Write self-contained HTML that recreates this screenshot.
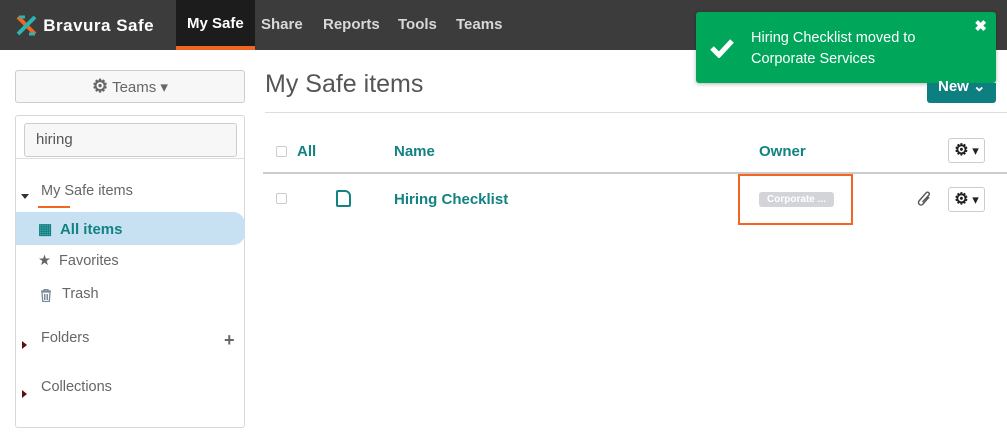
<!DOCTYPE html>
<html><head><style>
*{box-sizing:border-box;margin:0;padding:0}
body{width:1007px;height:445px;overflow:hidden;background:#fff;font-family:"Liberation Sans",sans-serif;position:relative;color:#555}
.hdr{position:absolute;left:0;top:0;width:1007px;height:50px;background:#3c3c3c}
.logo{position:absolute;left:16px;top:14px;color:#fff;font-size:17px;font-weight:bold;letter-spacing:.5px}
.nav{position:absolute;top:0;height:50px;line-height:50px;color:#d8d8d8;font-size:15px;font-weight:bold}
.act{background:#1c1c1c;color:#fff;border-bottom:4px solid #f26522;line-height:48px;padding:0 11px}
.teamsbtn{position:absolute;left:15px;top:70px;width:230px;height:33px;border:1px solid #ccc;border-radius:3px;background:#f7f7f7;text-align:center;line-height:31px;font-size:15px;color:#666}
.side{position:absolute;left:15px;top:115px;width:230px;height:313px;border:1px solid #d8d8d8;border-radius:3px}
.search{position:absolute;left:8px;top:7px;width:213px;height:34px;border:1px solid #ccc;border-radius:3px;background:#f7f7f7;padding-left:11px;line-height:32px;font-size:15px;color:#555}
.sep{position:absolute;left:0;top:42px;width:228px;border-top:1px solid #ddd}
.it{position:absolute;font-size:14.5px;color:#666}
.tri{position:absolute;width:0;height:0}
h1{position:absolute;left:265px;top:70px;font-weight:normal;font-size:25px;color:#555}
.teal{color:#128282;font-weight:bold;font-size:15px;position:absolute}
.cb{position:absolute;width:11px;height:11px;border:1px solid #ccc;border-radius:2px}
.gear{position:absolute;width:37px;height:25px;border:1px solid #ccc;border-radius:3px;background:#fff;font-size:13px;color:#222;text-align:center;line-height:23px}
.gear b{font-size:16px}
</style></head><body>
<div class="hdr">
 <div class="logo"><svg width="22" height="22" viewBox="0 0 22 22" style="vertical-align:-5px"><path d="M2 3L19 20" stroke="#f26522" stroke-width="4"/><path d="M19 3L2 20" stroke="#2ab5b0" stroke-width="4"/><path d="M3 3h6M13 20h6" stroke="#2ab5b0" stroke-width="3"/></svg> Bravura Safe</div>
 <div class="nav act" style="left:176px">My Safe</div>
 <div class="nav" style="left:261px">Share</div>
 <div class="nav" style="left:323px">Reports</div>
 <div class="nav" style="left:398px">Tools</div>
 <div class="nav" style="left:456px">Teams</div>
</div>
<div style="position:absolute;left:696px;top:12px;width:300px;height:71px;background:#00a65a;border-radius:3px;box-shadow:0 1px 4px rgba(0,0,0,.3);color:#fff;font-size:14.5px;line-height:21px">
 <svg width="24" height="20" viewBox="0 0 24 20" style="position:absolute;left:14px;top:26px"><path d="M2 10l7 7L22 3" stroke="#fff" stroke-width="5" fill="none"/></svg>
 <div style="position:absolute;left:55px;top:16px">Hiring Checklist moved to<br>Corporate Services</div>
 <div style="position:absolute;right:9px;top:4px;font-weight:bold;font-size:15px">✖</div>
</div>
<div style="position:absolute;left:927px;top:83px;width:69px;height:20px;background:#0e7f80;border-radius:0 0 3px 3px;color:#fff;font-weight:bold;font-size:15px;padding-left:11px;line-height:8px">New ⌄</div>
<div class="teamsbtn"><b style="font-size:18px;color:#666">⚙</b> Teams ▾</div>
<div class="side">
 <div class="search">hiring</div>
 <div class="sep"></div>
 <div class="tri" style="left:5px;top:78px;border-left:4px solid transparent;border-right:4px solid transparent;border-top:5px solid #333"></div>
 <div class="it" style="left:25px;top:67px">My Safe items</div>
 <div style="position:absolute;left:22px;top:90px;width:32px;border-top:2px solid #f26522"></div>
 <div style="position:absolute;left:0;top:96px;width:229px;height:33px;background:#c7e1f3;border-radius:0 12px 12px 0"></div>
 <div class="it" style="left:22px;top:104px;color:#128282;font-weight:bold;font-size:15px">▦&nbsp; All items</div>
 <div class="it" style="left:22px;top:137px">★&nbsp; Favorites</div>
 <svg width="12" height="13" viewBox="0 0 12 13" style="position:absolute;left:24px;top:173px"><path d="M1 2h10M4 2V0.5h4V2M2 3h8l-0.7 9.5H2.7z" stroke="#7a8a99" stroke-width="1.3" fill="none"/><path d="M4.5 5v6M6 5v6M7.5 5v6" stroke="#7a8a99"/></svg>
 <div class="it" style="left:46px;top:170px">Trash</div>
 <div class="tri" style="left:6px;top:225px;border-top:4px solid transparent;border-bottom:4px solid transparent;border-left:5px solid #5a1010"></div>
 <div class="it" style="left:25px;top:214px">Folders</div>
 <div class="it" style="left:208px;top:214px;font-weight:bold;font-size:18px;color:#666">+</div>
 <div class="tri" style="left:6px;top:274px;border-top:4px solid transparent;border-bottom:4px solid transparent;border-left:5px solid #5a1010"></div>
 <div class="it" style="left:25px;top:263px">Collections</div>
</div>
<h1>My Safe items</h1>
<div style="position:absolute;left:265px;top:112px;width:742px;border-top:1px solid #ddd"></div>
<div class="cb" style="left:276px;top:146px"></div>
<div class="teal" style="left:297px;top:143px">All</div>
<div class="teal" style="left:394px;top:143px">Name</div>
<div class="teal" style="left:759px;top:143px">Owner</div>
<div class="gear" style="left:948px;top:138px"><b>⚙</b> ▾</div>
<div style="position:absolute;left:263px;top:172px;width:744px;border-top:2px solid #ccc"></div>
<div class="cb" style="left:276px;top:193px"></div>
<div style="position:absolute;left:336px;top:190px;width:15px;height:17px;border:2px solid #128282;border-radius:2px 6px 2px 2px"></div>
<div class="teal" style="left:394px;top:191px">Hiring Checklist</div>
<div style="position:absolute;left:738px;top:174px;width:115px;height:51px;border:2px solid #f26522"></div>
<div style="position:absolute;left:759px;top:192px;width:75px;height:15px;background:#d2d4d8;border-radius:3px;color:#fff;font-size:10px;font-weight:bold;line-height:15px;text-align:center">Corporate ...</div>
<svg width="16" height="18" viewBox="0 0 16 18" style="position:absolute;left:917px;top:190px"><path d="M12 7L6 14a2.5 2.5 0 0 1-4-3L9 3a1.8 1.8 0 0 1 3 2L5.5 12" stroke="#555" stroke-width="1.4" fill="none"/></svg>
<div class="gear" style="left:948px;top:187px"><b>⚙</b> ▾</div>
</body></html>
